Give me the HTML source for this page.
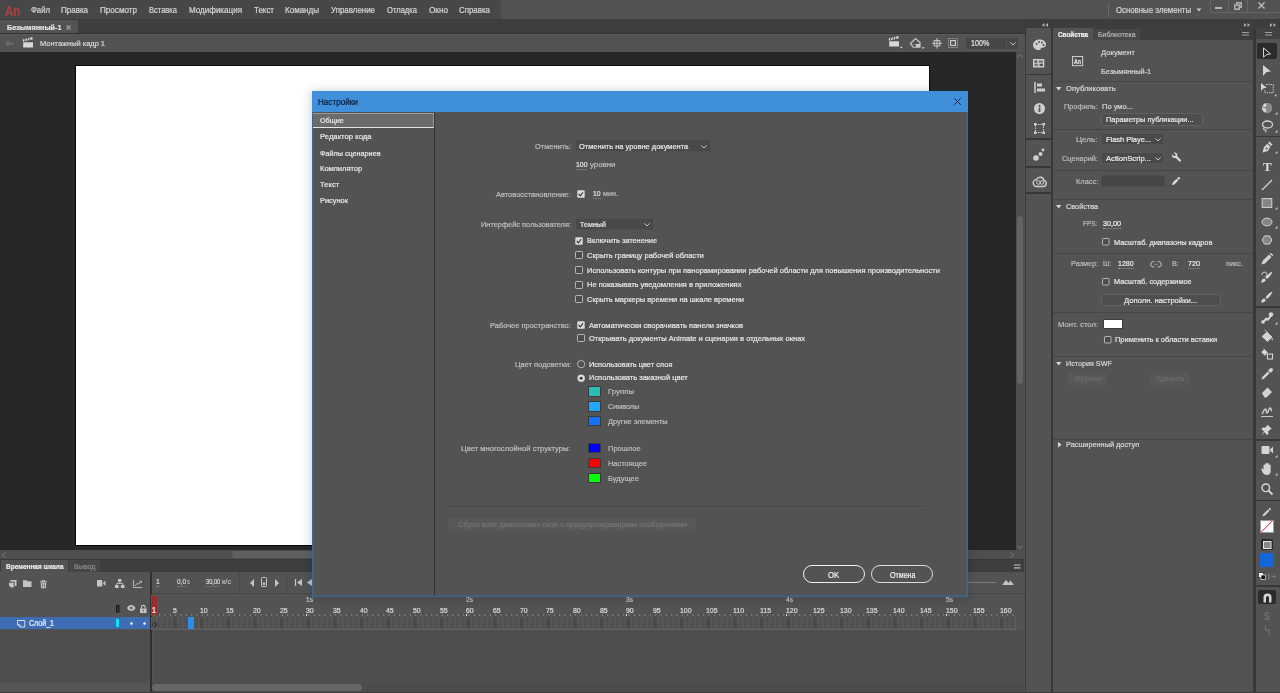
<!DOCTYPE html>
<html lang="ru">
<head>
<meta charset="utf-8">
<title>Adobe Animate</title>
<style>
*{box-sizing:border-box;margin:0;padding:0}
html,body{width:1280px;height:693px;overflow:hidden;background:#535353}
body{font-family:"Liberation Sans","DejaVu Sans",sans-serif;font-size:8px;color:#d2d2d2;position:relative}
#app{position:absolute;left:0;top:0;width:1280px;height:693px;will-change:transform}
.a{position:absolute}
.t{position:absolute;white-space:nowrap;line-height:12px;height:12px;transform-origin:0 50%;-webkit-text-stroke:0.22px currentColor}
svg{position:absolute;overflow:visible}
</style>
</head>
<body>
<div id="app">
<div class="a" style="left:0px;top:0px;width:1280px;height:20px;background:#525252;"></div>
<div class="a" style="left:0px;top:0px;width:501px;height:20px;background:#474747;"></div>
<div class="a" style="left:0px;top:19.4px;width:1280px;height:1px;background:#3c3c3c;"></div>
<span class="t" style="left:4.5px;top:4.77px;font-size:14.6px;color:#a5423e;font-weight:bold;transform:scaleX(0.7859);">An</span>
<span class="t" style="left:31.0px;top:4.01px;font-size:8.3px;color:#d4d4d4;transform:scaleX(0.9311);">Файл</span>
<span class="t" style="left:61.0px;top:4.01px;font-size:8.3px;color:#d4d4d4;transform:scaleX(0.9632);">Правка</span>
<span class="t" style="left:100.0px;top:4.01px;font-size:8.3px;color:#d4d4d4;transform:scaleX(0.9761);">Просмотр</span>
<span class="t" style="left:149.0px;top:4.01px;font-size:8.3px;color:#d4d4d4;transform:scaleX(0.9078);">Вставка</span>
<span class="t" style="left:189.0px;top:4.01px;font-size:8.3px;color:#d4d4d4;transform:scaleX(0.9691);">Модификация</span>
<span class="t" style="left:254.0px;top:4.01px;font-size:8.3px;color:#d4d4d4;transform:scaleX(0.9574);">Текст</span>
<span class="t" style="left:285.0px;top:4.01px;font-size:8.3px;color:#d4d4d4;transform:scaleX(0.9671);">Команды</span>
<span class="t" style="left:331.0px;top:4.01px;font-size:8.3px;color:#d4d4d4;transform:scaleX(0.9539);">Управление</span>
<span class="t" style="left:387.0px;top:4.01px;font-size:8.3px;color:#d4d4d4;transform:scaleX(0.9147);">Отладка</span>
<span class="t" style="left:429.0px;top:4.01px;font-size:8.3px;color:#d4d4d4;transform:scaleX(0.9854);">Окно</span>
<span class="t" style="left:459.0px;top:4.01px;font-size:8.3px;color:#d4d4d4;transform:scaleX(0.9520);">Справка</span>
<div class="a" style="left:1107.6px;top:3.5px;width:1px;height:13px;background:#696969;"></div>
<span class="t" style="left:1116.0px;top:3.71px;font-size:8.3px;color:#d4d4d4;transform:scaleX(0.9393);">Основные элементы</span>
<svg style="left:1196px;top:8px" width="6" height="4" viewBox="0 0 6 4"><path d="M0.5 0.5h5l-2.5 3z" fill="#c8c8c8"/></svg>
<div class="a" style="left:1209.5px;top:-1px;width:71px;height:14.2px;background:transparent;border:1px solid #646464"></div>
<div class="a" style="left:1227.5px;top:0px;width:1px;height:12.7px;background:#646464;"></div>
<div class="a" style="left:1246.5px;top:0px;width:1px;height:12.7px;background:#646464;"></div>
<div class="a" style="left:1215.3px;top:7px;width:6.8px;height:2px;background:#b4b4b4;"></div>
<svg style="left:1233.5px;top:2.2px" width="8" height="8" viewBox="0 0 8 8"><path d="M2.800 2.500v-1.700h4.400v4.400h-1.700" fill="none" stroke="#b4b4b4" stroke-width="1.500"/><rect x="0.800" y="3" width="4.400" height="4.200" fill="none" stroke="#b4b4b4" stroke-width="1.500"/></svg>
<svg style="left:1258.3px;top:2.3px" width="7" height="7" viewBox="0 0 7 7"><path d="M0.500 0.500l6 6M6.500 0.500l-6 6" fill="none" stroke="#b8b8b8" stroke-width="1.500"/></svg>
<div class="a" style="left:0px;top:20px;width:1280px;height:14px;background:#3e3e3e;"></div>
<div class="a" style="left:0px;top:20px;width:78px;height:14px;background:#535353;"></div>
<span class="t" style="left:6.5px;top:22.19px;font-size:8.0px;color:#e6e6e6;font-weight:bold;transform:scaleX(0.9064);">Безымянный-1</span>
<svg style="left:66px;top:25px" width="5" height="5" viewBox="0 0 5 5"><path d="M0.5 0.5l4 4M4.5 0.5l-4 4" stroke="#a0a0a0" stroke-width="1.1" fill="none"/></svg>
<div class="a" style="left:0px;top:33.2px;width:1024.3px;height:1px;background:#303030;"></div>
<div class="a" style="left:0px;top:34.2px;width:1024.3px;height:17.3px;background:#535353;border-top:1px solid #5a5a5a"></div>
<svg style="left:5px;top:40px" width="9" height="7" viewBox="0 0 9 7"><path d="M0 3.5l3.5-3.5v2.3h5v2.4h-5v2.3z" fill="#6a6a6a"/></svg>
<svg style="left:23px;top:37.5px" width="11" height="10" viewBox="0 0 11 10"><path d="M0.200 4.300h9.800v5.200h-9.800z" fill="#d8d8d8"/><g transform="rotate(-15 0.200 3.900)"><rect x="0.200" y="1.500" width="10" height="2.300" fill="#d8d8d8"/><path d="M2.700 1.300l-1.200 2.700M5.300 1.300l-1.200 2.700M7.900 1.300l-1.200 2.700" stroke="#535353" stroke-width=".9"/></g></svg>
<span class="t" style="left:40.0px;top:38.19px;font-size:8.0px;color:#d6d6d6;transform:scaleX(0.9315);">Монтажный кадр 1</span>
<svg style="left:889px;top:37px" width="11" height="10" viewBox="0 0 11 10"><path d="M0.200 4.300h9.800v5.200h-9.800z" fill="#d8d8d8"/><g transform="rotate(-15 0.200 3.900)"><rect x="0.200" y="1.500" width="10" height="2.300" fill="#d8d8d8"/><path d="M2.700 1.300l-1.200 2.700M5.300 1.300l-1.200 2.700M7.900 1.300l-1.200 2.700" stroke="#535353" stroke-width=".9"/></g><path d="M10.800 9.700h3.200l-1.600 1.800z" fill="#d0d0d0"/></svg>
<svg style="left:910px;top:37.5px" width="11" height="10" viewBox="0 0 11 10"><path d="M0.500 5.500l5-5 4.500 4v4.500h-7z" fill="none" stroke="#c8c8c8" stroke-width="1.200"/><path d="M3 6h7v3.500h-7z" fill="#c8c8c8"/><circle cx="4.500" cy="7.500" r="1.500" fill="#535353"/><path d="M11.500 9.200h3.200l-1.600 1.800z" fill="#d0d0d0"/></svg>
<svg style="left:931.5px;top:37.5px" width="10" height="10.5" viewBox="0 0 10 10.5"><rect x="2.200" y="2.600" width="5.600" height="5.300" fill="none" stroke="#c8c8c8"/><path d="M5 0v10.500M0 5.250h10" stroke="#c8c8c8" stroke-width="1"/></svg>
<svg style="left:948.2px;top:38px" width="10" height="10" viewBox="0 0 10 10"><rect x="0.500" y="0.500" width="9" height="9" fill="none" stroke="#a0a0a0" stroke-dasharray="1.200 .8"/><rect x="2.600" y="2.600" width="4.800" height="4.800" fill="none" stroke="#d0d0d0" stroke-width="1.100"/></svg>
<div class="a" style="left:966.4px;top:37.5px;width:39.4px;height:11px;background:#474747;"></div>
<div class="a" style="left:1006.6px;top:37.5px;width:11.4px;height:11px;background:#474747;"></div>
<span class="t" style="left:970.7px;top:37.80px;font-size:8.2px;color:#e0e0e0;transform:scaleX(0.8734);">100%</span>
<svg style="left:1009.5px;top:41.5px" width="6" height="4" viewBox="0 0 6 4"><path d="M0.300 0.300l2.700 2.700 2.700-2.700" fill="none" stroke="#d0d0d0" stroke-width=".9"/></svg>
<div class="a" style="left:0px;top:52px;width:1016px;height:498px;background:#272727;"></div>
<div class="a" style="left:76px;top:66px;width:853px;height:478.6px;background:#ffffff;box-shadow:0 0 0 0.9px #050505"></div>
<div class="a" style="left:1016px;top:52px;width:8.3px;height:498px;background:#4e4e4e;"></div>
<div class="a" style="left:1016.6px;top:216.4px;width:6.6px;height:168px;background:#636363;border-radius:3.300px"></div>
<svg style="left:1017px;top:54px" width="6" height="4" viewBox="0 0 6 4"><path d="M0.5 3.5l2.5-3 2.5 3" fill="none" stroke="#7a7a7a"/></svg>
<svg style="left:1017px;top:544.5px" width="6" height="4" viewBox="0 0 6 4"><path d="M0.5 0.5l2.5 3 2.5-3" fill="none" stroke="#7a7a7a"/></svg>
<div class="a" style="left:0px;top:550px;width:1024.3px;height:9.3px;background:#4e4e4e;"></div>
<div class="a" style="left:232px;top:551.4px;width:470px;height:6.6px;background:#5f5f5f;border-radius:3.300px"></div>
<svg style="left:2px;top:552px" width="4" height="6" viewBox="0 0 4 6"><path d="M3.5 0.5l-3 2.5 3 2.5" fill="none" stroke="#7a7a7a"/></svg>
<svg style="left:1010px;top:552px" width="4" height="6" viewBox="0 0 4 6"><path d="M0.5 0.5l3 2.5-3 2.5" fill="none" stroke="#7a7a7a"/></svg>
<div class="a" style="left:0px;top:559px;width:1024.3px;height:13.3px;background:#3e3e3e;"></div>
<div class="a" style="left:0px;top:559px;width:1024.3px;height:0.8px;background:#383838;"></div>
<div class="a" style="left:0.8px;top:559.8px;width:67.5px;height:12.5px;background:#535353;"></div>
<span class="t" style="left:6.0px;top:560.69px;font-size:8.0px;color:#ececec;font-weight:bold;transform:scaleX(0.8095);">Временная шкала</span>
<div class="a" style="left:68.8px;top:560px;width:31.5px;height:12.3px;background:#464646;"></div>
<span class="t" style="left:73.5px;top:560.69px;font-size:8.0px;color:#8c8c8c;transform:scaleX(0.8889);">Вывод</span>
<svg style="left:1013.5px;top:563.8px" width="6.5" height="5" viewBox="0 0 6.5 5"><path d="M0 1h6.500M0 3.800h6.500" stroke="#9a9a9a" stroke-width="1.700"/></svg>
<div class="a" style="left:0px;top:572px;width:1025px;height:121px;background:#535353;"></div>
<svg style="left:8.5px;top:580px" width="7.5" height="7.5" viewBox="0 0 7.5 7.5"><path d="M1.500 0h6v6h-1.800v-4.200h-4.200z" fill="#c4c4c4"/><path d="M0 2.800h4.700v4.700h-2.700l-2-2z" fill="#c4c4c4"/></svg>
<svg style="left:23px;top:580.3px" width="8.5" height="7" viewBox="0 0 8.5 7"><path d="M0 0.300h3.400l.9 1h4.200v5.700h-8.500z" fill="#c4c4c4"/></svg>
<svg style="left:39.5px;top:579.5px" width="7" height="8.2" viewBox="0 0 7 8.2"><path d="M0 1.600h7M2.300 1.600v-1.100h2.400v1.100" stroke="#c4c4c4" fill="none" stroke-width=".9"/><path d="M0.700 2.600h5.600l-.4 5.600h-4.800z" fill="#c4c4c4"/><path d="M2.500 3.500v3.800M4.500 3.500v3.800" stroke="#535353" stroke-width=".7"/></svg>
<svg style="left:96.5px;top:580px" width="8.5" height="6.6" viewBox="0 0 8.5 6.6"><rect x="0" y="0" width="5.300" height="6.600" rx=".6" fill="#c4c4c4"/><path d="M5.800 3.300l2.700-2.700v5.400z" fill="#c4c4c4"/></svg>
<svg style="left:114.5px;top:579px" width="9.5" height="9" viewBox="0 0 9.5 9"><rect x="3" y="0" width="3.500" height="2.800" fill="#c4c4c4"/><rect x="0" y="6" width="3.600" height="3" fill="#c4c4c4"/><rect x="5.900" y="6" width="3.600" height="3" fill="#c4c4c4"/><path d="M4.750 2.800v1.700M1.800 6v-1.500h5.900v1.500" fill="none" stroke="#c4c4c4" stroke-width=".9"/></svg>
<svg style="left:132.5px;top:580px" width="9" height="8" viewBox="0 0 9 8"><path d="M0.500 0v7.500h8.500" fill="none" stroke="#c4c4c4" stroke-width=".9"/><path d="M2 6l2.500-3 1.300 1.200 2.200-2.700" fill="none" stroke="#c4c4c4" stroke-width=".9"/><path d="M6.300 1.200h2v2" fill="none" stroke="#c4c4c4" stroke-width=".9"/></svg>
<div class="a" style="left:150.3px;top:572px;width:1.6px;height:121px;background:#2f2f2f;"></div>
<span class="t" style="left:155.5px;top:575.69px;font-size:8.0px;color:#dcdcdc;transform:scaleX(0.86);border-bottom:1px dotted #888;height:11px;">1</span>
<span class="t" style="left:177.0px;top:575.69px;font-size:8.0px;color:#dcdcdc;transform:scaleX(0.8090);border-bottom:1px dotted #888;height:11px;">0,0</span>
<span class="t" style="left:187.3px;top:576.11px;font-size:7.0px;color:#b8b8b8;transform:scaleX(0.7714);">s</span>
<span class="t" style="left:206.2px;top:575.69px;font-size:8.0px;color:#dcdcdc;transform:scaleX(0.7139);border-bottom:1px dotted #888;height:11px;">30,00</span>
<span class="t" style="left:222.0px;top:576.11px;font-size:7.0px;color:#b8b8b8;transform:scaleX(1.0804);">к/с</span>
<div class="a" style="left:239.2px;top:573px;width:1px;height:20px;background:#484848;"></div>
<div class="a" style="left:286.2px;top:573px;width:1px;height:20px;background:#484848;"></div>
<svg style="left:249.5px;top:578.5px" width="4" height="8" viewBox="0 0 4 8"><path d="M4 0v8l-4-4z" fill="#c4c4c4"/></svg>
<svg style="left:261px;top:577px" width="6" height="10" viewBox="0 0 6 10"><rect x="0.5" y="0.5" width="5" height="9" rx="0.8" fill="none" stroke="#c4c4c4"/><rect x="1.8" y="5.5" width="2.4" height="2.6" fill="#c4c4c4"/></svg>
<svg style="left:274.5px;top:578.5px" width="4" height="8" viewBox="0 0 4 8"><path d="M0 0v8l4-4z" fill="#c4c4c4"/></svg>
<svg style="left:294.5px;top:579px" width="7" height="7" viewBox="0 0 7 7"><path d="M0.5 0v7" stroke="#c4c4c4" stroke-width="1.2"/><path d="M7 0v7l-5-3.5z" fill="#c4c4c4"/></svg>
<svg style="left:307px;top:579px" width="5" height="7" viewBox="0 0 5 7"><path d="M5 0v7l-5-3.5z" fill="#c4c4c4"/></svg>
<div class="a" style="left:968px;top:582px;width:28px;height:1px;background:#7a7a7a;"></div>
<svg style="left:1002px;top:579px" width="12" height="6" viewBox="0 0 12 6"><path d="M0 6l4-5 2.5 3 2-2.5 3.5 4.5z" fill="#c4c4c4"/></svg>
<div class="a" style="left:151px;top:594px;width:874px;height:22px;background:#535353;"></div>
<div class="a" style="left:152px;top:593.3px;width:873px;height:1px;background:#474747;"></div>
<svg style="left:116px;top:605px" width="3.5" height="7.5" viewBox="0 0 3.5 7.5"><rect x="0.500" y="0.500" width="2.500" height="6.500" fill="#3a3a3a" stroke="#151515" stroke-width=".9"/></svg>
<svg style="left:127px;top:605.3px" width="8.5" height="6" viewBox="0 0 8.5 6"><path d="M0 3c1.800-4 6.700-4 8.500 0c-1.800 4-6.700 4-8.500 0z" fill="#c4c4c4"/><circle cx="4.250" cy="3" r="1.500" fill="#535353"/><circle cx="4.250" cy="3" r=".6" fill="#c4c4c4"/></svg>
<svg style="left:140.3px;top:604.5px" width="6.5" height="8" viewBox="0 0 6.5 8"><rect x="0" y="3.500" width="6.500" height="4.500" fill="#c4c4c4"/><path d="M1.400 3.500v-1.300a1.850 1.850 0 0 1 3.700 0v1.300" fill="none" stroke="#c4c4c4" stroke-width="1.100"/><rect x="2.700" y="4.800" width="1.100" height="1.800" fill="#535353"/></svg>
<span class="t" style="left:172.9px;top:605.10px;font-size:8.1px;color:#dcdcdc;transform:scaleX(0.86);">5</span>
<span class="t" style="left:199.6px;top:605.10px;font-size:8.1px;color:#dcdcdc;transform:scaleX(0.86);">10</span>
<span class="t" style="left:226.3px;top:605.10px;font-size:8.1px;color:#dcdcdc;transform:scaleX(0.86);">15</span>
<span class="t" style="left:252.9px;top:605.10px;font-size:8.1px;color:#dcdcdc;transform:scaleX(0.86);">20</span>
<span class="t" style="left:279.6px;top:605.10px;font-size:8.1px;color:#dcdcdc;transform:scaleX(0.86);">25</span>
<span class="t" style="left:306.3px;top:605.10px;font-size:8.1px;color:#dcdcdc;transform:scaleX(0.86);">30</span>
<span class="t" style="left:332.9px;top:605.10px;font-size:8.1px;color:#dcdcdc;transform:scaleX(0.86);">35</span>
<span class="t" style="left:359.6px;top:605.10px;font-size:8.1px;color:#dcdcdc;transform:scaleX(0.86);">40</span>
<span class="t" style="left:386.3px;top:605.10px;font-size:8.1px;color:#dcdcdc;transform:scaleX(0.86);">45</span>
<span class="t" style="left:412.9px;top:605.10px;font-size:8.1px;color:#dcdcdc;transform:scaleX(0.86);">50</span>
<span class="t" style="left:439.6px;top:605.10px;font-size:8.1px;color:#dcdcdc;transform:scaleX(0.86);">55</span>
<span class="t" style="left:466.3px;top:605.10px;font-size:8.1px;color:#dcdcdc;transform:scaleX(0.86);">60</span>
<span class="t" style="left:492.9px;top:605.10px;font-size:8.1px;color:#dcdcdc;transform:scaleX(0.86);">65</span>
<span class="t" style="left:519.6px;top:605.10px;font-size:8.1px;color:#dcdcdc;transform:scaleX(0.86);">70</span>
<span class="t" style="left:546.3px;top:605.10px;font-size:8.1px;color:#dcdcdc;transform:scaleX(0.86);">75</span>
<span class="t" style="left:572.9px;top:605.10px;font-size:8.1px;color:#dcdcdc;transform:scaleX(0.86);">80</span>
<span class="t" style="left:599.6px;top:605.10px;font-size:8.1px;color:#dcdcdc;transform:scaleX(0.86);">85</span>
<span class="t" style="left:626.3px;top:605.10px;font-size:8.1px;color:#dcdcdc;transform:scaleX(0.86);">90</span>
<span class="t" style="left:652.9px;top:605.10px;font-size:8.1px;color:#dcdcdc;transform:scaleX(0.86);">95</span>
<span class="t" style="left:679.6px;top:605.10px;font-size:8.1px;color:#dcdcdc;transform:scaleX(0.86);">100</span>
<span class="t" style="left:706.3px;top:605.10px;font-size:8.1px;color:#dcdcdc;transform:scaleX(0.86);">105</span>
<span class="t" style="left:732.9px;top:605.10px;font-size:8.1px;color:#dcdcdc;transform:scaleX(0.86);">110</span>
<span class="t" style="left:759.6px;top:605.10px;font-size:8.1px;color:#dcdcdc;transform:scaleX(0.86);">115</span>
<span class="t" style="left:786.3px;top:605.10px;font-size:8.1px;color:#dcdcdc;transform:scaleX(0.86);">120</span>
<span class="t" style="left:812.9px;top:605.10px;font-size:8.1px;color:#dcdcdc;transform:scaleX(0.86);">125</span>
<span class="t" style="left:839.6px;top:605.10px;font-size:8.1px;color:#dcdcdc;transform:scaleX(0.86);">130</span>
<span class="t" style="left:866.3px;top:605.10px;font-size:8.1px;color:#dcdcdc;transform:scaleX(0.86);">135</span>
<span class="t" style="left:892.9px;top:605.10px;font-size:8.1px;color:#dcdcdc;transform:scaleX(0.86);">140</span>
<span class="t" style="left:919.6px;top:605.10px;font-size:8.1px;color:#dcdcdc;transform:scaleX(0.86);">145</span>
<span class="t" style="left:946.3px;top:605.10px;font-size:8.1px;color:#dcdcdc;transform:scaleX(0.86);">150</span>
<span class="t" style="left:972.9px;top:605.10px;font-size:8.1px;color:#dcdcdc;transform:scaleX(0.86);">155</span>
<span class="t" style="left:999.6px;top:605.10px;font-size:8.1px;color:#dcdcdc;transform:scaleX(0.86);">160</span>
<svg style="left:151px;top:614px" width="866" height="2" viewBox="0 0 866 2"><rect x="2.90" y="0.2" width="0.9" height="1.700" fill="#909090"/><rect x="8.23" y="0.2" width="0.9" height="1.700" fill="#909090"/><rect x="13.57" y="0.2" width="0.9" height="1.700" fill="#909090"/><rect x="18.90" y="0.2" width="0.9" height="1.700" fill="#909090"/><rect x="24.23" y="0.2" width="0.9" height="1.700" fill="#909090"/><rect x="29.57" y="0.2" width="0.9" height="1.700" fill="#909090"/><rect x="34.90" y="0.2" width="0.9" height="1.700" fill="#909090"/><rect x="40.23" y="0.2" width="0.9" height="1.700" fill="#909090"/><rect x="45.57" y="0.2" width="0.9" height="1.700" fill="#909090"/><rect x="50.90" y="0.2" width="0.9" height="1.700" fill="#909090"/><rect x="56.23" y="0.2" width="0.9" height="1.700" fill="#909090"/><rect x="61.57" y="0.2" width="0.9" height="1.700" fill="#909090"/><rect x="66.90" y="0.2" width="0.9" height="1.700" fill="#909090"/><rect x="72.23" y="0.2" width="0.9" height="1.700" fill="#909090"/><rect x="77.57" y="0.2" width="0.9" height="1.700" fill="#909090"/><rect x="82.90" y="0.2" width="0.9" height="1.700" fill="#909090"/><rect x="88.23" y="0.2" width="0.9" height="1.700" fill="#909090"/><rect x="93.57" y="0.2" width="0.9" height="1.700" fill="#909090"/><rect x="98.90" y="0.2" width="0.9" height="1.700" fill="#909090"/><rect x="104.23" y="0.2" width="0.9" height="1.700" fill="#909090"/><rect x="109.57" y="0.2" width="0.9" height="1.700" fill="#909090"/><rect x="114.90" y="0.2" width="0.9" height="1.700" fill="#909090"/><rect x="120.23" y="0.2" width="0.9" height="1.700" fill="#909090"/><rect x="125.57" y="0.2" width="0.9" height="1.700" fill="#909090"/><rect x="130.90" y="0.2" width="0.9" height="1.700" fill="#909090"/><rect x="136.23" y="0.2" width="0.9" height="1.700" fill="#909090"/><rect x="141.57" y="0.2" width="0.9" height="1.700" fill="#909090"/><rect x="146.90" y="0.2" width="0.9" height="1.700" fill="#909090"/><rect x="152.23" y="0.2" width="0.9" height="1.700" fill="#909090"/><rect x="157.57" y="0.2" width="0.9" height="1.700" fill="#909090"/><rect x="162.90" y="0.2" width="0.9" height="1.700" fill="#909090"/><rect x="168.23" y="0.2" width="0.9" height="1.700" fill="#909090"/><rect x="173.57" y="0.2" width="0.9" height="1.700" fill="#909090"/><rect x="178.90" y="0.2" width="0.9" height="1.700" fill="#909090"/><rect x="184.23" y="0.2" width="0.9" height="1.700" fill="#909090"/><rect x="189.57" y="0.2" width="0.9" height="1.700" fill="#909090"/><rect x="194.90" y="0.2" width="0.9" height="1.700" fill="#909090"/><rect x="200.23" y="0.2" width="0.9" height="1.700" fill="#909090"/><rect x="205.57" y="0.2" width="0.9" height="1.700" fill="#909090"/><rect x="210.90" y="0.2" width="0.9" height="1.700" fill="#909090"/><rect x="216.23" y="0.2" width="0.9" height="1.700" fill="#909090"/><rect x="221.57" y="0.2" width="0.9" height="1.700" fill="#909090"/><rect x="226.90" y="0.2" width="0.9" height="1.700" fill="#909090"/><rect x="232.23" y="0.2" width="0.9" height="1.700" fill="#909090"/><rect x="237.57" y="0.2" width="0.9" height="1.700" fill="#909090"/><rect x="242.90" y="0.2" width="0.9" height="1.700" fill="#909090"/><rect x="248.23" y="0.2" width="0.9" height="1.700" fill="#909090"/><rect x="253.57" y="0.2" width="0.9" height="1.700" fill="#909090"/><rect x="258.90" y="0.2" width="0.9" height="1.700" fill="#909090"/><rect x="264.23" y="0.2" width="0.9" height="1.700" fill="#909090"/><rect x="269.57" y="0.2" width="0.9" height="1.700" fill="#909090"/><rect x="274.90" y="0.2" width="0.9" height="1.700" fill="#909090"/><rect x="280.23" y="0.2" width="0.9" height="1.700" fill="#909090"/><rect x="285.57" y="0.2" width="0.9" height="1.700" fill="#909090"/><rect x="290.90" y="0.2" width="0.9" height="1.700" fill="#909090"/><rect x="296.23" y="0.2" width="0.9" height="1.700" fill="#909090"/><rect x="301.57" y="0.2" width="0.9" height="1.700" fill="#909090"/><rect x="306.90" y="0.2" width="0.9" height="1.700" fill="#909090"/><rect x="312.23" y="0.2" width="0.9" height="1.700" fill="#909090"/><rect x="317.57" y="0.2" width="0.9" height="1.700" fill="#909090"/><rect x="322.90" y="0.2" width="0.9" height="1.700" fill="#909090"/><rect x="328.23" y="0.2" width="0.9" height="1.700" fill="#909090"/><rect x="333.57" y="0.2" width="0.9" height="1.700" fill="#909090"/><rect x="338.90" y="0.2" width="0.9" height="1.700" fill="#909090"/><rect x="344.23" y="0.2" width="0.9" height="1.700" fill="#909090"/><rect x="349.57" y="0.2" width="0.9" height="1.700" fill="#909090"/><rect x="354.90" y="0.2" width="0.9" height="1.700" fill="#909090"/><rect x="360.23" y="0.2" width="0.9" height="1.700" fill="#909090"/><rect x="365.57" y="0.2" width="0.9" height="1.700" fill="#909090"/><rect x="370.90" y="0.2" width="0.9" height="1.700" fill="#909090"/><rect x="376.23" y="0.2" width="0.9" height="1.700" fill="#909090"/><rect x="381.57" y="0.2" width="0.9" height="1.700" fill="#909090"/><rect x="386.90" y="0.2" width="0.9" height="1.700" fill="#909090"/><rect x="392.23" y="0.2" width="0.9" height="1.700" fill="#909090"/><rect x="397.57" y="0.2" width="0.9" height="1.700" fill="#909090"/><rect x="402.90" y="0.2" width="0.9" height="1.700" fill="#909090"/><rect x="408.23" y="0.2" width="0.9" height="1.700" fill="#909090"/><rect x="413.57" y="0.2" width="0.9" height="1.700" fill="#909090"/><rect x="418.90" y="0.2" width="0.9" height="1.700" fill="#909090"/><rect x="424.23" y="0.2" width="0.9" height="1.700" fill="#909090"/><rect x="429.57" y="0.2" width="0.9" height="1.700" fill="#909090"/><rect x="434.90" y="0.2" width="0.9" height="1.700" fill="#909090"/><rect x="440.23" y="0.2" width="0.9" height="1.700" fill="#909090"/><rect x="445.57" y="0.2" width="0.9" height="1.700" fill="#909090"/><rect x="450.90" y="0.2" width="0.9" height="1.700" fill="#909090"/><rect x="456.23" y="0.2" width="0.9" height="1.700" fill="#909090"/><rect x="461.57" y="0.2" width="0.9" height="1.700" fill="#909090"/><rect x="466.90" y="0.2" width="0.9" height="1.700" fill="#909090"/><rect x="472.23" y="0.2" width="0.9" height="1.700" fill="#909090"/><rect x="477.57" y="0.2" width="0.9" height="1.700" fill="#909090"/><rect x="482.90" y="0.2" width="0.9" height="1.700" fill="#909090"/><rect x="488.23" y="0.2" width="0.9" height="1.700" fill="#909090"/><rect x="493.57" y="0.2" width="0.9" height="1.700" fill="#909090"/><rect x="498.90" y="0.2" width="0.9" height="1.700" fill="#909090"/><rect x="504.23" y="0.2" width="0.9" height="1.700" fill="#909090"/><rect x="509.57" y="0.2" width="0.9" height="1.700" fill="#909090"/><rect x="514.90" y="0.2" width="0.9" height="1.700" fill="#909090"/><rect x="520.23" y="0.2" width="0.9" height="1.700" fill="#909090"/><rect x="525.57" y="0.2" width="0.9" height="1.700" fill="#909090"/><rect x="530.90" y="0.2" width="0.9" height="1.700" fill="#909090"/><rect x="536.23" y="0.2" width="0.9" height="1.700" fill="#909090"/><rect x="541.57" y="0.2" width="0.9" height="1.700" fill="#909090"/><rect x="546.90" y="0.2" width="0.9" height="1.700" fill="#909090"/><rect x="552.23" y="0.2" width="0.9" height="1.700" fill="#909090"/><rect x="557.57" y="0.2" width="0.9" height="1.700" fill="#909090"/><rect x="562.90" y="0.2" width="0.9" height="1.700" fill="#909090"/><rect x="568.23" y="0.2" width="0.9" height="1.700" fill="#909090"/><rect x="573.57" y="0.2" width="0.9" height="1.700" fill="#909090"/><rect x="578.90" y="0.2" width="0.9" height="1.700" fill="#909090"/><rect x="584.23" y="0.2" width="0.9" height="1.700" fill="#909090"/><rect x="589.57" y="0.2" width="0.9" height="1.700" fill="#909090"/><rect x="594.90" y="0.2" width="0.9" height="1.700" fill="#909090"/><rect x="600.23" y="0.2" width="0.9" height="1.700" fill="#909090"/><rect x="605.57" y="0.2" width="0.9" height="1.700" fill="#909090"/><rect x="610.90" y="0.2" width="0.9" height="1.700" fill="#909090"/><rect x="616.23" y="0.2" width="0.9" height="1.700" fill="#909090"/><rect x="621.57" y="0.2" width="0.9" height="1.700" fill="#909090"/><rect x="626.90" y="0.2" width="0.9" height="1.700" fill="#909090"/><rect x="632.23" y="0.2" width="0.9" height="1.700" fill="#909090"/><rect x="637.57" y="0.2" width="0.9" height="1.700" fill="#909090"/><rect x="642.90" y="0.2" width="0.9" height="1.700" fill="#909090"/><rect x="648.23" y="0.2" width="0.9" height="1.700" fill="#909090"/><rect x="653.57" y="0.2" width="0.9" height="1.700" fill="#909090"/><rect x="658.90" y="0.2" width="0.9" height="1.700" fill="#909090"/><rect x="664.23" y="0.2" width="0.9" height="1.700" fill="#909090"/><rect x="669.57" y="0.2" width="0.9" height="1.700" fill="#909090"/><rect x="674.90" y="0.2" width="0.9" height="1.700" fill="#909090"/><rect x="680.23" y="0.2" width="0.9" height="1.700" fill="#909090"/><rect x="685.57" y="0.2" width="0.9" height="1.700" fill="#909090"/><rect x="690.90" y="0.2" width="0.9" height="1.700" fill="#909090"/><rect x="696.23" y="0.2" width="0.9" height="1.700" fill="#909090"/><rect x="701.57" y="0.2" width="0.9" height="1.700" fill="#909090"/><rect x="706.90" y="0.2" width="0.9" height="1.700" fill="#909090"/><rect x="712.23" y="0.2" width="0.9" height="1.700" fill="#909090"/><rect x="717.57" y="0.2" width="0.9" height="1.700" fill="#909090"/><rect x="722.90" y="0.2" width="0.9" height="1.700" fill="#909090"/><rect x="728.23" y="0.2" width="0.9" height="1.700" fill="#909090"/><rect x="733.57" y="0.2" width="0.9" height="1.700" fill="#909090"/><rect x="738.90" y="0.2" width="0.9" height="1.700" fill="#909090"/><rect x="744.23" y="0.2" width="0.9" height="1.700" fill="#909090"/><rect x="749.57" y="0.2" width="0.9" height="1.700" fill="#909090"/><rect x="754.90" y="0.2" width="0.9" height="1.700" fill="#909090"/><rect x="760.23" y="0.2" width="0.9" height="1.700" fill="#909090"/><rect x="765.57" y="0.2" width="0.9" height="1.700" fill="#909090"/><rect x="770.90" y="0.2" width="0.9" height="1.700" fill="#909090"/><rect x="776.23" y="0.2" width="0.9" height="1.700" fill="#909090"/><rect x="781.57" y="0.2" width="0.9" height="1.700" fill="#909090"/><rect x="786.90" y="0.2" width="0.9" height="1.700" fill="#909090"/><rect x="792.23" y="0.2" width="0.9" height="1.700" fill="#909090"/><rect x="797.57" y="0.2" width="0.9" height="1.700" fill="#909090"/><rect x="802.90" y="0.2" width="0.9" height="1.700" fill="#909090"/><rect x="808.23" y="0.2" width="0.9" height="1.700" fill="#909090"/><rect x="813.57" y="0.2" width="0.9" height="1.700" fill="#909090"/><rect x="818.90" y="0.2" width="0.9" height="1.700" fill="#909090"/><rect x="824.23" y="0.2" width="0.9" height="1.700" fill="#909090"/><rect x="829.57" y="0.2" width="0.9" height="1.700" fill="#909090"/><rect x="834.90" y="0.2" width="0.9" height="1.700" fill="#909090"/><rect x="840.23" y="0.2" width="0.9" height="1.700" fill="#909090"/><rect x="845.57" y="0.2" width="0.9" height="1.700" fill="#909090"/><rect x="850.90" y="0.2" width="0.9" height="1.700" fill="#909090"/><rect x="856.23" y="0.2" width="0.9" height="1.700" fill="#909090"/><rect x="861.57" y="0.2" width="0.9" height="1.700" fill="#909090"/></svg>
<span class="t" style="left:306.2px;top:594.27px;font-size:7.8px;color:#c8c8c8;transform:scaleX(0.86);">1s</span>
<div class="a" style="left:305.7px;top:613.5px;width:1px;height:2.5px;background:#e0e0e0;"></div>
<span class="t" style="left:466.2px;top:594.27px;font-size:7.8px;color:#c8c8c8;transform:scaleX(0.86);">2s</span>
<div class="a" style="left:465.7px;top:613.5px;width:1px;height:2.5px;background:#e0e0e0;"></div>
<span class="t" style="left:626.2px;top:594.27px;font-size:7.8px;color:#c8c8c8;transform:scaleX(0.86);">3s</span>
<div class="a" style="left:625.7px;top:613.5px;width:1px;height:2.5px;background:#e0e0e0;"></div>
<span class="t" style="left:786.2px;top:594.27px;font-size:7.8px;color:#c8c8c8;transform:scaleX(0.86);">4s</span>
<div class="a" style="left:785.7px;top:613.5px;width:1px;height:2.5px;background:#e0e0e0;"></div>
<span class="t" style="left:946.2px;top:594.27px;font-size:7.8px;color:#c8c8c8;transform:scaleX(0.86);">5s</span>
<div class="a" style="left:945.7px;top:613.5px;width:1px;height:2.5px;background:#e0e0e0;"></div>
<div class="a" style="left:0px;top:629.5px;width:150.3px;height:53.5px;background:#4e4e4e;"></div>
<div class="a" style="left:152px;top:629.8px;width:872.3px;height:53.2px;background:#4e4e4e;"></div>
<div class="a" style="left:0px;top:616.8px;width:150.3px;height:12.5px;background:#3e6db3;"></div>
<svg style="left:17.2px;top:619.5px" width="8.3" height="7.5" viewBox="0 0 8.3 7.5"><path d="M0.500 0.500h7.300v6.500h-4.800l-2.500-2.300z" fill="none" stroke="#e8e8e8" stroke-width=".9"/><path d="M0.500 4.700h2.500v2.300" fill="none" stroke="#e8e8e8" stroke-width=".8"/></svg>
<span class="t" style="left:29.0px;top:617.21px;font-size:8.3px;color:#f0f0f0;transform:scaleX(0.8502);">Слой_1</span>
<div class="a" style="left:116px;top:619px;width:3.4px;height:7.6px;background:#10e0ff;"></div>
<svg style="left:130px;top:621.5px" width="3" height="3" viewBox="0 0 3 3"><circle cx="1.5" cy="1.5" r="1.2" fill="#fff"/></svg>
<svg style="left:142.7px;top:621.5px" width="3" height="3" viewBox="0 0 3 3"><circle cx="1.5" cy="1.5" r="1.2" fill="#fff"/></svg>
<div class="a" style="left:151.3px;top:616.7px;width:865px;height:12.6px;background:#5f5f5f;"></div>
<svg style="left:151.3px;top:617px" width="865" height="12" viewBox="0 0 865 12"><rect x="0.55" y="0.3" width="4.33" height="11.2" fill="#515151"/><rect x="5.88" y="0.3" width="4.33" height="11.2" fill="#515151"/><rect x="11.22" y="0.3" width="4.33" height="11.2" fill="#515151"/><rect x="16.55" y="0.3" width="4.33" height="11.2" fill="#515151"/><rect x="21.88" y="0.3" width="4.33" height="11.2" fill="#494949"/><rect x="27.22" y="0.3" width="4.33" height="11.2" fill="#515151"/><rect x="32.55" y="0.3" width="4.33" height="11.2" fill="#515151"/><rect x="37.88" y="0.3" width="4.33" height="11.2" fill="#515151"/><rect x="43.22" y="0.3" width="4.33" height="11.2" fill="#515151"/><rect x="48.55" y="0.3" width="4.33" height="11.2" fill="#494949"/><rect x="53.88" y="0.3" width="4.33" height="11.2" fill="#515151"/><rect x="59.22" y="0.3" width="4.33" height="11.2" fill="#515151"/><rect x="64.55" y="0.3" width="4.33" height="11.2" fill="#515151"/><rect x="69.88" y="0.3" width="4.33" height="11.2" fill="#515151"/><rect x="75.22" y="0.3" width="4.33" height="11.2" fill="#494949"/><rect x="80.55" y="0.3" width="4.33" height="11.2" fill="#515151"/><rect x="85.88" y="0.3" width="4.33" height="11.2" fill="#515151"/><rect x="91.22" y="0.3" width="4.33" height="11.2" fill="#515151"/><rect x="96.55" y="0.3" width="4.33" height="11.2" fill="#515151"/><rect x="101.88" y="0.3" width="4.33" height="11.2" fill="#494949"/><rect x="107.22" y="0.3" width="4.33" height="11.2" fill="#515151"/><rect x="112.55" y="0.3" width="4.33" height="11.2" fill="#515151"/><rect x="117.88" y="0.3" width="4.33" height="11.2" fill="#515151"/><rect x="123.22" y="0.3" width="4.33" height="11.2" fill="#515151"/><rect x="128.55" y="0.3" width="4.33" height="11.2" fill="#494949"/><rect x="133.88" y="0.3" width="4.33" height="11.2" fill="#515151"/><rect x="139.22" y="0.3" width="4.33" height="11.2" fill="#515151"/><rect x="144.55" y="0.3" width="4.33" height="11.2" fill="#515151"/><rect x="149.88" y="0.3" width="4.33" height="11.2" fill="#515151"/><rect x="155.22" y="0.3" width="4.33" height="11.2" fill="#494949"/><rect x="160.55" y="0.3" width="4.33" height="11.2" fill="#515151"/><rect x="165.88" y="0.3" width="4.33" height="11.2" fill="#515151"/><rect x="171.22" y="0.3" width="4.33" height="11.2" fill="#515151"/><rect x="176.55" y="0.3" width="4.33" height="11.2" fill="#515151"/><rect x="181.88" y="0.3" width="4.33" height="11.2" fill="#494949"/><rect x="187.22" y="0.3" width="4.33" height="11.2" fill="#515151"/><rect x="192.55" y="0.3" width="4.33" height="11.2" fill="#515151"/><rect x="197.88" y="0.3" width="4.33" height="11.2" fill="#515151"/><rect x="203.22" y="0.3" width="4.33" height="11.2" fill="#515151"/><rect x="208.55" y="0.3" width="4.33" height="11.2" fill="#494949"/><rect x="213.88" y="0.3" width="4.33" height="11.2" fill="#515151"/><rect x="219.22" y="0.3" width="4.33" height="11.2" fill="#515151"/><rect x="224.55" y="0.3" width="4.33" height="11.2" fill="#515151"/><rect x="229.88" y="0.3" width="4.33" height="11.2" fill="#515151"/><rect x="235.22" y="0.3" width="4.33" height="11.2" fill="#494949"/><rect x="240.55" y="0.3" width="4.33" height="11.2" fill="#515151"/><rect x="245.88" y="0.3" width="4.33" height="11.2" fill="#515151"/><rect x="251.22" y="0.3" width="4.33" height="11.2" fill="#515151"/><rect x="256.55" y="0.3" width="4.33" height="11.2" fill="#515151"/><rect x="261.88" y="0.3" width="4.33" height="11.2" fill="#494949"/><rect x="267.22" y="0.3" width="4.33" height="11.2" fill="#515151"/><rect x="272.55" y="0.3" width="4.33" height="11.2" fill="#515151"/><rect x="277.88" y="0.3" width="4.33" height="11.2" fill="#515151"/><rect x="283.22" y="0.3" width="4.33" height="11.2" fill="#515151"/><rect x="288.55" y="0.3" width="4.33" height="11.2" fill="#494949"/><rect x="293.88" y="0.3" width="4.33" height="11.2" fill="#515151"/><rect x="299.22" y="0.3" width="4.33" height="11.2" fill="#515151"/><rect x="304.55" y="0.3" width="4.33" height="11.2" fill="#515151"/><rect x="309.88" y="0.3" width="4.33" height="11.2" fill="#515151"/><rect x="315.22" y="0.3" width="4.33" height="11.2" fill="#494949"/><rect x="320.55" y="0.3" width="4.33" height="11.2" fill="#515151"/><rect x="325.88" y="0.3" width="4.33" height="11.2" fill="#515151"/><rect x="331.22" y="0.3" width="4.33" height="11.2" fill="#515151"/><rect x="336.55" y="0.3" width="4.33" height="11.2" fill="#515151"/><rect x="341.88" y="0.3" width="4.33" height="11.2" fill="#494949"/><rect x="347.22" y="0.3" width="4.33" height="11.2" fill="#515151"/><rect x="352.55" y="0.3" width="4.33" height="11.2" fill="#515151"/><rect x="357.88" y="0.3" width="4.33" height="11.2" fill="#515151"/><rect x="363.22" y="0.3" width="4.33" height="11.2" fill="#515151"/><rect x="368.55" y="0.3" width="4.33" height="11.2" fill="#494949"/><rect x="373.88" y="0.3" width="4.33" height="11.2" fill="#515151"/><rect x="379.22" y="0.3" width="4.33" height="11.2" fill="#515151"/><rect x="384.55" y="0.3" width="4.33" height="11.2" fill="#515151"/><rect x="389.88" y="0.3" width="4.33" height="11.2" fill="#515151"/><rect x="395.22" y="0.3" width="4.33" height="11.2" fill="#494949"/><rect x="400.55" y="0.3" width="4.33" height="11.2" fill="#515151"/><rect x="405.88" y="0.3" width="4.33" height="11.2" fill="#515151"/><rect x="411.22" y="0.3" width="4.33" height="11.2" fill="#515151"/><rect x="416.55" y="0.3" width="4.33" height="11.2" fill="#515151"/><rect x="421.88" y="0.3" width="4.33" height="11.2" fill="#494949"/><rect x="427.22" y="0.3" width="4.33" height="11.2" fill="#515151"/><rect x="432.55" y="0.3" width="4.33" height="11.2" fill="#515151"/><rect x="437.88" y="0.3" width="4.33" height="11.2" fill="#515151"/><rect x="443.22" y="0.3" width="4.33" height="11.2" fill="#515151"/><rect x="448.55" y="0.3" width="4.33" height="11.2" fill="#494949"/><rect x="453.88" y="0.3" width="4.33" height="11.2" fill="#515151"/><rect x="459.22" y="0.3" width="4.33" height="11.2" fill="#515151"/><rect x="464.55" y="0.3" width="4.33" height="11.2" fill="#515151"/><rect x="469.88" y="0.3" width="4.33" height="11.2" fill="#515151"/><rect x="475.22" y="0.3" width="4.33" height="11.2" fill="#494949"/><rect x="480.55" y="0.3" width="4.33" height="11.2" fill="#515151"/><rect x="485.88" y="0.3" width="4.33" height="11.2" fill="#515151"/><rect x="491.22" y="0.3" width="4.33" height="11.2" fill="#515151"/><rect x="496.55" y="0.3" width="4.33" height="11.2" fill="#515151"/><rect x="501.88" y="0.3" width="4.33" height="11.2" fill="#494949"/><rect x="507.22" y="0.3" width="4.33" height="11.2" fill="#515151"/><rect x="512.55" y="0.3" width="4.33" height="11.2" fill="#515151"/><rect x="517.88" y="0.3" width="4.33" height="11.2" fill="#515151"/><rect x="523.22" y="0.3" width="4.33" height="11.2" fill="#515151"/><rect x="528.55" y="0.3" width="4.33" height="11.2" fill="#494949"/><rect x="533.88" y="0.3" width="4.33" height="11.2" fill="#515151"/><rect x="539.22" y="0.3" width="4.33" height="11.2" fill="#515151"/><rect x="544.55" y="0.3" width="4.33" height="11.2" fill="#515151"/><rect x="549.88" y="0.3" width="4.33" height="11.2" fill="#515151"/><rect x="555.22" y="0.3" width="4.33" height="11.2" fill="#494949"/><rect x="560.55" y="0.3" width="4.33" height="11.2" fill="#515151"/><rect x="565.88" y="0.3" width="4.33" height="11.2" fill="#515151"/><rect x="571.22" y="0.3" width="4.33" height="11.2" fill="#515151"/><rect x="576.55" y="0.3" width="4.33" height="11.2" fill="#515151"/><rect x="581.88" y="0.3" width="4.33" height="11.2" fill="#494949"/><rect x="587.22" y="0.3" width="4.33" height="11.2" fill="#515151"/><rect x="592.55" y="0.3" width="4.33" height="11.2" fill="#515151"/><rect x="597.88" y="0.3" width="4.33" height="11.2" fill="#515151"/><rect x="603.22" y="0.3" width="4.33" height="11.2" fill="#515151"/><rect x="608.55" y="0.3" width="4.33" height="11.2" fill="#494949"/><rect x="613.88" y="0.3" width="4.33" height="11.2" fill="#515151"/><rect x="619.22" y="0.3" width="4.33" height="11.2" fill="#515151"/><rect x="624.55" y="0.3" width="4.33" height="11.2" fill="#515151"/><rect x="629.88" y="0.3" width="4.33" height="11.2" fill="#515151"/><rect x="635.22" y="0.3" width="4.33" height="11.2" fill="#494949"/><rect x="640.55" y="0.3" width="4.33" height="11.2" fill="#515151"/><rect x="645.88" y="0.3" width="4.33" height="11.2" fill="#515151"/><rect x="651.22" y="0.3" width="4.33" height="11.2" fill="#515151"/><rect x="656.55" y="0.3" width="4.33" height="11.2" fill="#515151"/><rect x="661.88" y="0.3" width="4.33" height="11.2" fill="#494949"/><rect x="667.22" y="0.3" width="4.33" height="11.2" fill="#515151"/><rect x="672.55" y="0.3" width="4.33" height="11.2" fill="#515151"/><rect x="677.88" y="0.3" width="4.33" height="11.2" fill="#515151"/><rect x="683.22" y="0.3" width="4.33" height="11.2" fill="#515151"/><rect x="688.55" y="0.3" width="4.33" height="11.2" fill="#494949"/><rect x="693.88" y="0.3" width="4.33" height="11.2" fill="#515151"/><rect x="699.22" y="0.3" width="4.33" height="11.2" fill="#515151"/><rect x="704.55" y="0.3" width="4.33" height="11.2" fill="#515151"/><rect x="709.88" y="0.3" width="4.33" height="11.2" fill="#515151"/><rect x="715.22" y="0.3" width="4.33" height="11.2" fill="#494949"/><rect x="720.55" y="0.3" width="4.33" height="11.2" fill="#515151"/><rect x="725.88" y="0.3" width="4.33" height="11.2" fill="#515151"/><rect x="731.22" y="0.3" width="4.33" height="11.2" fill="#515151"/><rect x="736.55" y="0.3" width="4.33" height="11.2" fill="#515151"/><rect x="741.88" y="0.3" width="4.33" height="11.2" fill="#494949"/><rect x="747.22" y="0.3" width="4.33" height="11.2" fill="#515151"/><rect x="752.55" y="0.3" width="4.33" height="11.2" fill="#515151"/><rect x="757.88" y="0.3" width="4.33" height="11.2" fill="#515151"/><rect x="763.22" y="0.3" width="4.33" height="11.2" fill="#515151"/><rect x="768.55" y="0.3" width="4.33" height="11.2" fill="#494949"/><rect x="773.88" y="0.3" width="4.33" height="11.2" fill="#515151"/><rect x="779.22" y="0.3" width="4.33" height="11.2" fill="#515151"/><rect x="784.55" y="0.3" width="4.33" height="11.2" fill="#515151"/><rect x="789.88" y="0.3" width="4.33" height="11.2" fill="#515151"/><rect x="795.22" y="0.3" width="4.33" height="11.2" fill="#494949"/><rect x="800.55" y="0.3" width="4.33" height="11.2" fill="#515151"/><rect x="805.88" y="0.3" width="4.33" height="11.2" fill="#515151"/><rect x="811.22" y="0.3" width="4.33" height="11.2" fill="#515151"/><rect x="816.55" y="0.3" width="4.33" height="11.2" fill="#515151"/><rect x="821.88" y="0.3" width="4.33" height="11.2" fill="#494949"/><rect x="827.22" y="0.3" width="4.33" height="11.2" fill="#515151"/><rect x="832.55" y="0.3" width="4.33" height="11.2" fill="#515151"/><rect x="837.88" y="0.3" width="4.33" height="11.2" fill="#515151"/><rect x="843.22" y="0.3" width="4.33" height="11.2" fill="#515151"/><rect x="848.55" y="0.3" width="4.33" height="11.2" fill="#494949"/><rect x="853.88" y="0.3" width="4.33" height="11.2" fill="#515151"/><rect x="859.22" y="0.3" width="4.33" height="11.2" fill="#515151"/></svg>
<div class="a" style="left:188.33333333333331px;top:616.8px;width:5.833333333333333px;height:12.5px;background:#2d8ceb;"></div>
<svg style="left:151.60000000000002px;top:621.3px" width="5" height="7" viewBox="0 0 5 7"><circle cx="2.500" cy="3.500" r="1.900" fill="none" stroke="#161616" stroke-width=".9"/></svg>
<div class="a" style="left:151.3px;top:629px;width:865px;height:0.8px;background:#636363;"></div>
<div class="a" style="left:150.6px;top:595.9px;width:7px;height:19.6px;background:#9a2c2c;border:1px solid #aa3333;border-bottom:none"></div>
<span class="t" style="left:152.2px;top:605.10px;font-size:8.2px;color:#ffffff;transform:scaleX(0.86);">1</span>
<div class="a" style="left:152.9px;top:615.5px;width:1px;height:67.5px;background:#a83636;"></div>
<div class="a" style="left:0px;top:683px;width:150.3px;height:10px;background:#555555;"></div>
<div class="a" style="left:152px;top:683px;width:872.3px;height:10px;background:#4c4c4c;"></div>
<div class="a" style="left:152px;top:683.8px;width:210px;height:7.5px;background:#666666;border-radius:4px"></div>
<div class="a" style="left:1025px;top:20px;width:255px;height:673px;background:#383838;"></div>
<div class="a" style="left:1025.8px;top:20.4px;width:254.2px;height:8px;background:#3d3d3d;"></div>
<svg style="left:1041.5px;top:22.6px" width="6" height="4" viewBox="0 0 6 4"><path d="M2.5 0v4l-2.5-2zM6 0v4l-2.5-2z" fill="#b0b0b0"/></svg>
<svg style="left:1243.5px;top:22.5px" width="6" height="4" viewBox="0 0 6 4"><path d="M0 0v4l2.5-2zM3.5 0v4l2.5-2z" fill="#b0b0b0"/></svg>
<svg style="left:1270.3px;top:22.5px" width="6" height="4" viewBox="0 0 6 4"><path d="M0 0v4l2.5-2zM3.5 0v4l2.5-2z" fill="#b0b0b0"/></svg>
<div class="a" style="left:1025.6px;top:28.4px;width:25.4px;height:665px;background:#535353;"></div>
<svg style="left:1032.5px;top:31px" width="12" height="2" viewBox="0 0 12 2"><path d="M0 1h12" stroke="#626262" stroke-width="1.3" stroke-dasharray="1.5 1.5"/></svg>
<svg style="left:1032.5px;top:39px" width="13" height="11" viewBox="0 0 13 11"><path d="M6.5 0.5c4 0 6.5 2.3 6.5 5s-2.5 3.5-4 3.2c-1-.2-1.3.3-1.2 1 .1.8-.7 1.3-2 1.3-3 0-5.8-2-5.8-5s2.5-5.5 6.500-5.500z" fill="#cfcfcf"/><circle cx="3.5" cy="5" r="1" fill="#535353"/><circle cx="6" cy="3" r="1" fill="#535353"/><circle cx="9" cy="3.500" r="1" fill="#535353"/><circle cx="10.500" cy="6" r="1" fill="#535353"/></svg>
<svg style="left:1033px;top:58.6px" width="11.3" height="8.5" viewBox="0 0 12 9"><rect x="0" y="0" width="12" height="9" fill="#cfcfcf"/><rect x="1.5" y="1.500" width="3" height="2.500" fill="#535353"/><rect x="6" y="1.500" width="4.500" height="2.500" fill="#777"/><rect x="1.5" y="5" width="4" height="2.500" fill="#777"/><rect x="7" y="5" width="3.500" height="2.500" fill="#535353"/></svg>
<div class="a" style="left:1025.8px;top:73.5px;width:26px;height:1.5px;background:#383838;"></div>
<svg style="left:1032.5px;top:77px" width="12" height="2" viewBox="0 0 12 2"><path d="M0 1h12" stroke="#626262" stroke-width="1.3" stroke-dasharray="1.5 1.5"/></svg>
<svg style="left:1034px;top:82px" width="11" height="11" viewBox="0 0 11 11"><path d="M1 0v11" stroke="#cfcfcf" stroke-width="1.500"/><rect x="3" y="1.500" width="5" height="3" fill="#cfcfcf"/><rect x="3" y="6.500" width="8" height="3" fill="#cfcfcf"/></svg>
<svg style="left:1033.5px;top:103px" width="11" height="11" viewBox="0 0 11 11"><circle cx="5.500" cy="5.500" r="5.500" fill="#cfcfcf"/><rect x="4.600" y="4.500" width="1.800" height="4.500" fill="#535353"/><circle cx="5.500" cy="2.800" r="1.100" fill="#535353"/></svg>
<svg style="left:1034px;top:123px" width="11" height="11" viewBox="0 0 11 11"><rect x="1.500" y="1.500" width="8" height="8" fill="none" stroke="#cfcfcf" stroke-dasharray="1.500 1"/><rect x="0" y="0" width="2.500" height="2.500" fill="#cfcfcf"/><rect x="8.500" y="0" width="2.500" height="2.500" fill="#cfcfcf"/><rect x="0" y="8.500" width="2.500" height="2.500" fill="#cfcfcf"/><rect x="8.500" y="8.500" width="2.500" height="2.500" fill="#cfcfcf"/></svg>
<div class="a" style="left:1025.8px;top:138px;width:26px;height:1.5px;background:#383838;"></div>
<svg style="left:1032.5px;top:142px" width="12" height="2" viewBox="0 0 12 2"><path d="M0 1h12" stroke="#626262" stroke-width="1.3" stroke-dasharray="1.5 1.5"/></svg>
<svg style="left:1033px;top:148px" width="12" height="13" viewBox="0 0 12 13"><circle cx="3" cy="10" r="2.800" fill="#cfcfcf"/><circle cx="7.500" cy="6" r="2" fill="#cfcfcf"/><circle cx="10" cy="2" r="1.400" fill="#cfcfcf"/></svg>
<div class="a" style="left:1025.8px;top:166px;width:26px;height:1.5px;background:#383838;"></div>
<svg style="left:1032.5px;top:169.6px" width="12" height="2" viewBox="0 0 12 2"><path d="M0 1h12" stroke="#626262" stroke-width="1.3" stroke-dasharray="1.5 1.5"/></svg>
<svg style="left:1032.5px;top:177px" width="14" height="10" viewBox="0 0 14 10"><path d="M4 9.500a3.500 3.500 0 0 1-.5-7a4 4 0 0 1 7.500 0.800a3.200 3.200 0 0 1-.5 6.200z" fill="none" stroke="#cfcfcf" stroke-width="1.400"/><circle cx="5.500" cy="5.500" r="1.800" fill="none" stroke="#cfcfcf"/><circle cx="8.800" cy="5.500" r="1.800" fill="none" stroke="#cfcfcf"/></svg>
<div class="a" style="left:1025.8px;top:192.4px;width:26px;height:1.5px;background:#383838;"></div>
<div class="a" style="left:1053.3px;top:28.4px;width:199.7px;height:665px;background:#535353;"></div>
<div class="a" style="left:1053.3px;top:28.4px;width:199.7px;height:11.2px;background:#3e3e3e;"></div>
<div class="a" style="left:1053.3px;top:28.4px;width:39.6px;height:11.2px;background:#535353;"></div>
<span class="t" style="left:1057.5px;top:29.09px;font-size:8.0px;color:#f4f4f4;font-weight:bold;transform:scaleX(0.7915);">Свойства</span>
<div class="a" style="left:1093.3px;top:29px;width:47px;height:10.6px;background:#474747;"></div>
<span class="t" style="left:1097.7px;top:29.09px;font-size:8.0px;color:#b4b4b4;transform:scaleX(0.8644);">Библиотека</span>
<svg style="left:1242px;top:32px" width="7" height="4" viewBox="0 0 7 4"><path d="M0 0.500h7M0 3h7" stroke="#a0a0a0" stroke-width="1.200"/></svg>
<span class="t" style="left:1101.2px;top:46.89px;font-size:8.0px;color:#d6d6d6;transform:scaleX(0.9521);">Документ</span>
<span class="t" style="left:1101.2px;top:66.29px;font-size:8.0px;color:#d6d6d6;transform:scaleX(0.9135);">Безымянный-1</span>
<svg style="left:1072px;top:56px" width="11.2" height="10.2" viewBox="0 0 11.2 10.2"><rect x="0.500" y="0.500" width="10.200" height="9.200" fill="none" stroke="#d8d8d8" stroke-width=".9"/></svg>
<span class="t" style="left:1074.0px;top:55.76px;font-size:6.3px;color:#e0e0e0;font-weight:bold;transform:scaleX(0.8327);">An</span>
<div class="a" style="left:1053.3px;top:81.4px;width:199.7px;height:1px;background:#464646;"></div>
<svg style="left:1056.3px;top:86.8px" width="5.4" height="4" viewBox="0 0 5.4 4"><path d="M0 0h5.400l-2.700 3.600z" fill="#d8d8d8"/></svg>
<span class="t" style="left:1065.8px;top:83.29px;font-size:8.0px;color:#d6d6d6;transform:scaleX(0.9481);">Опубликовать</span>
<span class="t" style="left:1064.0px;top:101.29px;font-size:8.0px;color:#bababa;transform:scaleX(0.9166);">Профиль:</span>
<span class="t" style="left:1101.5px;top:101.29px;font-size:8.0px;color:#d6d6d6;transform:scaleX(0.9377);">По умо...</span>
<div class="a" style="left:1100.8px;top:113px;width:102.6px;height:12.7px;background:#4e4e4e;border:1px solid #606060;border-radius:2px"></div>
<span class="t" style="left:1106.4px;top:114.09px;font-size:8.0px;color:#e8e8e8;transform:scaleX(0.9224);">Параметры публикации...</span>
<div class="a" style="left:1053.3px;top:129.4px;width:199.7px;height:1px;background:#464646;"></div>
<span class="t" style="left:1076.2px;top:134.19px;font-size:8.0px;color:#bababa;transform:scaleX(1.0155);">Цель:</span>
<div class="a" style="left:1101px;top:133.3px;width:63px;height:12.2px;background:#494949;border:1px solid #565656;border-radius:2px"></div>
<span class="t" style="left:1105.7px;top:134.19px;font-size:8.0px;color:#ececec;transform:scaleX(0.9284);">Flash Playe...</span>
<svg style="left:1155.4px;top:138.2px" width="6" height="4" viewBox="0 0 6 4"><path d="M0.300 0.300l2.700 2.700 2.700-2.700" fill="none" stroke="#d0d0d0" stroke-width=".9"/></svg>
<span class="t" style="left:1061.7px;top:152.59px;font-size:8.0px;color:#bababa;transform:scaleX(0.9183);">Сценарий:</span>
<div class="a" style="left:1101px;top:151.7px;width:63px;height:12.2px;background:#494949;border:1px solid #565656;border-radius:2px"></div>
<span class="t" style="left:1105.7px;top:152.59px;font-size:8.0px;color:#ececec;transform:scaleX(0.9546);">ActionScrip...</span>
<svg style="left:1155.4px;top:156.6px" width="6" height="4" viewBox="0 0 6 4"><path d="M0.300 0.300l2.700 2.700 2.700-2.700" fill="none" stroke="#d0d0d0" stroke-width=".9"/></svg>
<svg style="left:1170.5px;top:153px" width="9.5" height="9.5" viewBox="0 0 9.5 9.5"><path d="M1 1.200l2 2 1.300-.3.300-1.300-2-2a2.800 2.800 0 0 1 3.600 3.600l3.500 3.500a1.100 1.100 0 0 1-1.600 1.600l-3.500-3.500a2.800 2.800 0 0 1-3.600-3.600z" fill="#dcdcdc"/></svg>
<div class="a" style="left:1053.3px;top:169.9px;width:199.7px;height:1px;background:#464646;"></div>
<span class="t" style="left:1075.5px;top:176.19px;font-size:8.0px;color:#bababa;transform:scaleX(0.9250);">Класс:</span>
<div class="a" style="left:1101px;top:175.2px;width:63.6px;height:11.8px;background:#464646;border:1px solid #4e4e4e;border-radius:2px"></div>
<svg style="left:1171.5px;top:177.3px" width="8" height="8" viewBox="0 0 8 8"><path d="M0 8l.6-2.300 3.900-3.900 1.700 1.700-3.900 3.900zM5.100 1.200l.9-.9a.9.900 0 0 1 1.700 1.700l-.9.900z" fill="#dcdcdc"/></svg>
<div class="a" style="left:1053.3px;top:198.9px;width:199.7px;height:1px;background:#464646;"></div>
<svg style="left:1056.3px;top:204.6px" width="5.4" height="4" viewBox="0 0 5.4 4"><path d="M0 0h5.400l-2.700 3.600z" fill="#d8d8d8"/></svg>
<span class="t" style="left:1065.8px;top:201.09px;font-size:8.0px;color:#d6d6d6;transform:scaleX(0.9163);">Свойства</span>
<span class="t" style="left:1083.2px;top:218.09px;font-size:8.0px;color:#bababa;transform:scaleX(0.8155);">FPS:</span>
<span class="t" style="left:1102.6px;top:218.09px;font-size:8.0px;color:#ececec;transform:scaleX(0.8986);border-bottom:1px dotted #999;height:11px;">30,00</span>
<svg style="left:1102.2px;top:238.35px" width="7.5" height="7.5" viewBox="0 0 7.5 7.5"><rect x="0.500" y="0.500" width="6.5" height="6.5" rx=".8" fill="#4c4c4c" stroke="#c8c8c8" stroke-width=".85"/></svg>
<span class="t" style="left:1113.7px;top:236.79px;font-size:8.0px;color:#e4e4e4;transform:scaleX(0.9160);">Масштаб. диапазоны кадров</span>
<div class="a" style="left:1053.3px;top:252.9px;width:199.7px;height:1px;background:#464646;"></div>
<span class="t" style="left:1070.7px;top:258.29px;font-size:8.0px;color:#bababa;transform:scaleX(0.9186);">Размер:</span>
<span class="t" style="left:1102.6px;top:258.29px;font-size:8.0px;color:#bababa;transform:scaleX(0.8680);">Ш:</span>
<span class="t" style="left:1117.8px;top:258.29px;font-size:8.0px;color:#ececec;transform:scaleX(0.8766);border-bottom:1px dotted #999;height:11px;">1280</span>
<svg style="left:1150.5px;top:260.5px" width="10" height="7" viewBox="0 0 10 7"><path d="M3.500 0.500h-1a2.500 2.500 0 0 0 0 5.500h1M6.500 0.500h1a2.500 2.500 0 0 1 0 5.500h-1" fill="none" stroke="#c8c8c8" stroke-width="1"/><path d="M3.500 3.300h3" stroke="#c8c8c8" stroke-width="1" stroke-dasharray="1 1"/></svg>
<span class="t" style="left:1172.2px;top:258.29px;font-size:8.0px;color:#bababa;transform:scaleX(0.8992);">В:</span>
<span class="t" style="left:1188.0px;top:258.29px;font-size:8.0px;color:#ececec;transform:scaleX(0.8982);border-bottom:1px dotted #999;height:11px;">720</span>
<span class="t" style="left:1225.6px;top:258.29px;font-size:8.0px;color:#bababa;transform:scaleX(0.9128);">пикс.</span>
<svg style="left:1102.2px;top:277.85px" width="7.5" height="7.5" viewBox="0 0 7.5 7.5"><rect x="0.500" y="0.500" width="6.5" height="6.5" rx=".8" fill="#4c4c4c" stroke="#c8c8c8" stroke-width=".85"/></svg>
<span class="t" style="left:1113.7px;top:276.29px;font-size:8.0px;color:#e4e4e4;transform:scaleX(0.9148);">Масштаб. содержимое</span>
<div class="a" style="left:1101.2px;top:294.4px;width:120px;height:12px;background:#4e4e4e;border:1px solid #606060;border-radius:2px"></div>
<span class="t" style="left:1124.4px;top:295.19px;font-size:8.0px;color:#e8e8e8;transform:scaleX(0.9538);">Дополн. настройки...</span>
<div class="a" style="left:1053.3px;top:312.4px;width:199.7px;height:1px;background:#464646;"></div>
<span class="t" style="left:1057.9px;top:318.69px;font-size:8.0px;color:#bababa;transform:scaleX(0.9641);">Монт. стол:</span>
<div class="a" style="left:1103.3px;top:319px;width:19.7px;height:9.7px;background:#ffffff;border:1px solid #3c3c3c"></div>
<svg style="left:1104.3px;top:335.65px" width="7.5" height="7.5" viewBox="0 0 7.5 7.5"><rect x="0.500" y="0.500" width="6.5" height="6.5" rx=".8" fill="#4c4c4c" stroke="#c8c8c8" stroke-width=".85"/></svg>
<span class="t" style="left:1115.4px;top:334.09px;font-size:8.0px;color:#e4e4e4;transform:scaleX(0.9305);">Применить к области вставки</span>
<div class="a" style="left:1053.3px;top:356.2px;width:199.7px;height:1px;background:#464646;"></div>
<svg style="left:1056.3px;top:361.59999999999997px" width="5.4" height="4" viewBox="0 0 5.4 4"><path d="M0 0h5.400l-2.700 3.600z" fill="#d8d8d8"/></svg>
<span class="t" style="left:1065.8px;top:358.09px;font-size:8.0px;color:#d6d6d6;transform:scaleX(0.8975);">История SWF</span>
<div class="a" style="left:1067.6px;top:372.7px;width:39px;height:12px;background:#585858;border-radius:2px"></div>
<span class="t" style="left:1073.5px;top:373.49px;font-size:8.0px;color:#6c6c6c;transform:scaleX(0.9417);">Журнал</span>
<div class="a" style="left:1150px;top:372.7px;width:39.5px;height:12px;background:#585858;border-radius:2px"></div>
<span class="t" style="left:1155.5px;top:373.49px;font-size:8.0px;color:#6c6c6c;transform:scaleX(0.9330);">Удалить</span>
<div class="a" style="left:1053.3px;top:438.59999999999997px;width:199.7px;height:1px;background:#464646;"></div>
<svg style="left:1058px;top:442.1px" width="4" height="5.4" viewBox="0 0 4 5.4"><path d="M0 0v5.400l3.600-2.700z" fill="#d8d8d8"/></svg>
<span class="t" style="left:1065.8px;top:439.49px;font-size:8.0px;color:#d6d6d6;transform:scaleX(0.9173);">Расширенный доступ</span>
<div class="a" style="left:1256px;top:28px;width:24px;height:665px;background:#535353;"></div>
<div class="a" style="left:1256px;top:28px;width:24px;height:10.5px;background:#424242;"></div>
<svg style="left:1265px;top:31.5px" width="7" height="4" viewBox="0 0 7 4"><path d="M0 0.5h7M0 3h7" stroke="#a0a0a0" stroke-width="1.2"/></svg>
<div class="a" style="left:1257.1px;top:43.2px;width:19.5px;height:15.7px;background:#2b2b2b;border-radius:2px"></div>
<svg style="left:1263.1px;top:46.5px" width="8" height="10.5" viewBox="0 0 8 10.5"><path d="M0.500 0.900l7 6.100-3.800.5-3.200 2.700z" fill="none" stroke="#d4d4d4" stroke-width="1"/></svg>
<svg style="left:1263.1px;top:65.1px" width="8" height="11" viewBox="0 0 8 11"><path d="M0 0l7.900 6.600-4.300.5-3.600 3.800z" fill="#d4d4d4"/></svg>
<svg style="left:1261px;top:83.3px" width="13" height="12" viewBox="0 0 13 12"><path d="M0 0l5.800 4.800-3.200.4-2.600 2.800z" fill="#d4d4d4"/><path d="M5 1.500h7.200v8.300h-8.500v-2.500" fill="none" stroke="#d4d4d4" stroke-width="1" stroke-dasharray="1.300 1"/></svg>
<svg style="left:1274.3px;top:94.3px" width="2.3" height="2.3" viewBox="0 0 2.3 2.3"><path d="M2.300 0v2.300h-2.300z" fill="#d0d0d0"/></svg>
<svg style="left:1261.0px;top:101.5px" width="12" height="12" viewBox="0 0 12 12"><circle cx="6" cy="6" r="5" fill="#d4d4d4"/><path d="M6 1v10M1.500 4.500c3 2 6 2 9 0" fill="none" stroke="#535353" stroke-width=".9"/><path d="M6 1a5 5 0 0 1 0 10" fill="#8a8a8a"/></svg>
<svg style="left:1275.3px;top:111.7px" width="2.3" height="2.3" viewBox="0 0 2.3 2.3"><path d="M2.5 0v2.5h-2.5z" fill="#d0d0d0"/></svg>
<svg style="left:1261.0px;top:120.2px" width="12" height="12" viewBox="0 0 12 12"><ellipse cx="6.500" cy="4.500" rx="5" ry="3.500" fill="none" stroke="#d4d4d4" stroke-width="1.300"/><path d="M3.500 7.500c-1.500 1-1 2.500.5 2.500s1.500 1.500.5 2.500" fill="none" stroke="#d4d4d4" stroke-width="1.100"/></svg>
<svg style="left:1275.3px;top:130.4px" width="2.3" height="2.3" viewBox="0 0 2.3 2.3"><path d="M2.5 0v2.5h-2.5z" fill="#d0d0d0"/></svg>
<div class="a" style="left:1256px;top:135.7px;width:24px;height:1.4px;background:#383838;"></div>
<svg style="left:1261.0px;top:140.7px" width="12" height="12" viewBox="0 0 12 12"><path d="M8.500 0.500l3 3-1.500 1.500-3-3zM6.300 2.800l3 3-2.300 4.200-5.500 1.500 1.500-5.500zM1.500 11.500l3.500-3.500" fill="#d4d4d4"/><circle cx="5.600" cy="7.400" r="1" fill="#535353"/></svg>
<svg style="left:1275.3px;top:150.89999999999998px" width="2.3" height="2.3" viewBox="0 0 2.3 2.3"><path d="M2.5 0v2.5h-2.5z" fill="#d0d0d0"/></svg>
<span class="t" style="left:1262.6px;top:161.22px;font-size:12.5px;color:#d4d4d4;font-weight:bold;transform:scaleX(1.0307);font-family:'Liberation Serif',serif;">T</span>
<svg style="left:1261.0px;top:178.7px" width="12" height="12" viewBox="0 0 12 12"><path d="M1 11l10-10" stroke="#d4d4d4" stroke-width="1.300"/></svg>
<svg style="left:1261.0px;top:196.9px" width="12" height="12" viewBox="0 0 12 12"><rect x="1.200" y="1.600" width="9.600" height="8.800" fill="#858585" stroke="#d4d4d4" stroke-width="1"/></svg>
<svg style="left:1275.3px;top:207.1px" width="2.3" height="2.3" viewBox="0 0 2.3 2.3"><path d="M2.5 0v2.5h-2.5z" fill="#d0d0d0"/></svg>
<svg style="left:1261.0px;top:216.0px" width="12" height="12" viewBox="0 0 12 12"><ellipse cx="6" cy="6" rx="5" ry="3.900" fill="#858585" stroke="#d4d4d4" stroke-width="1"/></svg>
<svg style="left:1275.3px;top:226.2px" width="2.3" height="2.3" viewBox="0 0 2.3 2.3"><path d="M2.5 0v2.5h-2.5z" fill="#d0d0d0"/></svg>
<svg style="left:1261.0px;top:234.4px" width="12" height="12" viewBox="0 0 12 12"><path d="M3.600 1.900h4.800l2.400 4.100-2.400 4.100h-4.800l-2.400-4.100z" fill="#858585" stroke="#d4d4d4" stroke-width="1"/></svg>
<svg style="left:1261.0px;top:252.8px" width="12" height="12" viewBox="0 0 12 12"><path d="M0.500 11.500l1-3.500 6.500-6.500 2.500 2.500-6.500 6.500zM8.800 0.700l1-1 2.500 2.500-1 1z" fill="#d4d4d4"/></svg>
<svg style="left:1261.0px;top:271.0px" width="12" height="12" viewBox="0 0 12 12"><path d="M11.500 0.500c-3 1-5.500 3.500-7 6l1.500 1.500c2.500-2 4.500-4.500 5.500-7.500zM3.500 7.500c-2 0-3 1.500-3.300 4 2.500 0 4.300-.8 4.500-2.800z" fill="#d4d4d4"/><path d="M1 4a2.500 2.500 0 1 1 3 2" fill="none" stroke="#d4d4d4" stroke-width=".9"/></svg>
<svg style="left:1261.0px;top:290.5px" width="12" height="12" viewBox="0 0 12 12"><path d="M11.500 0.500c-3 1-5.500 3.500-7 6l1.500 1.500c2.500-2 4.500-4.500 5.500-7.500zM3.500 7.500c-2 0-3 1.500-3.300 4 2.500 0 4.300-.8 4.500-2.800z" fill="#d4d4d4"/></svg>
<div class="a" style="left:1256px;top:306.3px;width:24px;height:1.4px;background:#383838;"></div>
<svg style="left:1261.0px;top:312.2px" width="12" height="12" viewBox="0 0 12 12"><path d="M1.500 10.500l3.500-3.500 2 .5 3-4" fill="none" stroke="#d4d4d4" stroke-width="2"/><circle cx="2" cy="10" r="1.800" fill="#d4d4d4"/><circle cx="10" cy="2.500" r="2.200" fill="#d4d4d4"/><circle cx="5.500" cy="7" r="1.600" fill="#d4d4d4"/></svg>
<svg style="left:1275.3px;top:322.4px" width="2.3" height="2.3" viewBox="0 0 2.3 2.3"><path d="M2.5 0v2.5h-2.5z" fill="#d0d0d0"/></svg>
<svg style="left:1261.0px;top:330.0px" width="12" height="12" viewBox="0 0 12 12"><path d="M1 6.500l5-4.500 5 5-4.500 4.500zM6 2l-2.500-2" fill="#d4d4d4" stroke="#d4d4d4" stroke-width=".8"/><path d="M11 7.500c1 1.500 1.200 2.500.3 3-.9-.5-.9-1.500-.3-3z" fill="#d4d4d4"/></svg>
<svg style="left:1261.0px;top:348.0px" width="12" height="12" viewBox="0 0 12 12"><path d="M0.500 4l3-2.500 3 3-2.500 3zM3.500 1.500l-1.500-1.500" fill="#d4d4d4" stroke="#d4d4d4" stroke-width=".6"/><rect x="6.500" y="6" width="5" height="5" fill="none" stroke="#d4d4d4" stroke-width="1.100"/></svg>
<svg style="left:1261.0px;top:367.5px" width="12" height="12" viewBox="0 0 12 12"><path d="M0.500 11.500l.8-2.500 5.500-5.500 1.700 1.700-5.500 5.500zM7 2.500l2-2a1.600 1.600 0 0 1 2.500 2.500l-2 2z" fill="#d4d4d4"/></svg>
<svg style="left:1261.0px;top:386.2px" width="12" height="12" viewBox="0 0 12 12"><path d="M1 7l5.500-5.500 4.500 4.500-5.500 5.500h-2z" fill="#d4d4d4"/><path d="M1 7l3 3" stroke="#535353" stroke-width="0"/></svg>
<svg style="left:1261.0px;top:405.0px" width="12" height="12" viewBox="0 0 12 12"><path d="M1 9c1.500-2 2-5 3.500-5s0 4 1.500 4 1.500-5 3-5 1 3 2 3" fill="none" stroke="#d4d4d4" stroke-width="1.400"/><path d="M0 11.500h12" stroke="#d4d4d4" stroke-width=".9"/></svg>
<svg style="left:1261.0px;top:423.7px" width="12" height="12" viewBox="0 0 12 12"><path d="M6.500 0.500l4.500 4.500-1.500.3-2.300 2.300.3 2.400-1.500 1-2.500-2.800-3 3.300.5-1 2-3-2.500-2.500 1-1.500 2.500.3 2.300-2.300z" fill="#d4d4d4"/></svg>
<div class="a" style="left:1256px;top:439.2px;width:24px;height:1.4px;background:#383838;"></div>
<svg style="left:1261.0px;top:444.4px" width="12" height="12" viewBox="0 0 12 12"><rect x="0.500" y="2" width="8" height="8" rx="1" fill="#d4d4d4"/><path d="M8.500 6l3.500-3.500v7z" fill="#d4d4d4"/></svg>
<svg style="left:1275.3px;top:454.59999999999997px" width="2.3" height="2.3" viewBox="0 0 2.3 2.3"><path d="M2.5 0v2.5h-2.5z" fill="#d0d0d0"/></svg>
<svg style="left:1261.0px;top:463.1px" width="12" height="12" viewBox="0 0 12 12"><path d="M2.500 5.500v-3a.9.9 0 0 1 1.800 0v-1.500a.9.900 0 0 1 1.800 0v-.2a.900.900 0 0 1 1.800 0v1.500a.900.900 0 0 1 1.800 0v5.500c0 3-1.500 4.200-4 4.200s-3.500-1.500-4.500-3.500l-1-2.500c.8-.8 1.800-.3 2.300.8z" fill="#d4d4d4"/></svg>
<svg style="left:1275.3px;top:473.3px" width="2.3" height="2.3" viewBox="0 0 2.3 2.3"><path d="M2.5 0v2.5h-2.5z" fill="#d0d0d0"/></svg>
<svg style="left:1261.0px;top:482.6px" width="12" height="12" viewBox="0 0 12 12"><circle cx="4.800" cy="4.800" r="3.800" fill="none" stroke="#d4d4d4" stroke-width="1.400"/><path d="M7.500 7.500l4 4" stroke="#d4d4d4" stroke-width="1.800"/></svg>
<div class="a" style="left:1256px;top:500px;width:24px;height:1.4px;background:#383838;"></div>
<svg style="left:1262.0px;top:506.6px" width="10" height="10" viewBox="0 0 10 10"><path d="M0.500 9.500l.7-2.200 4.700-4.700 1.500 1.500-4.700 4.700zM6.500 2l1.200-1.200 1.500 1.500-1.200 1.200z" fill="#d4d4d4"/></svg>
<div class="a" style="left:1260.4px;top:519.7px;width:13.4px;height:13.3px;background:#ffffff;border:1px solid #999"></div>
<svg style="left:1260.4px;top:519.7px" width="13.4" height="13.3" viewBox="0 0 13.4 13.3"><path d="M0.800 12.500l11.800-11.700" stroke="#e02020" stroke-width="1"/></svg>
<div class="a" style="left:1261.3px;top:538.9px;width:11.9px;height:11.5px;background:#2a2a2a;border-radius:1.500px"></div>
<svg style="left:1263px;top:540.6px" width="8.5" height="8" viewBox="0 0 8.5 8"><rect x="0.500" y="0.500" width="7.500" height="7" fill="#888" stroke="#e0e0e0" stroke-width="1"/></svg>
<div class="a" style="left:1260.4px;top:553.2px;width:13.4px;height:13.4px;background:#1268d8;"></div>
<svg style="left:1258px;top:572px" width="7.5" height="7.5" viewBox="0 0 7.5 7.5"><rect x="0.500" y="0.500" width="5" height="5" fill="#fff" stroke="#222" stroke-width=".7"/><rect x="3" y="3" width="4.500" height="4.500" fill="#111" stroke="#eee" stroke-width=".7"/></svg>
<svg style="left:1267.5px;top:572.5px" width="7" height="7" viewBox="0 0 7 7"><path d="M0.500 0.500v6l2.500-3zM4 3.500h3.500M6 1.500l1.500 2-1.500 2" fill="none" stroke="#7c7c7c" stroke-width=".9"/></svg>
<div class="a" style="left:1256px;top:585.2px;width:24px;height:1.4px;background:#383838;"></div>
<div class="a" style="left:1258px;top:590.2px;width:18px;height:14px;background:#2b2b2b;border-radius:2px"></div>
<svg style="left:1261.5px;top:592.0px" width="11" height="11" viewBox="0 0 11 11"><path d="M1.500 10.500v-5a4 4 0 0 1 8 0v5h-2.500v-5a1.500 1.500 0 0 0-3 0v5z" fill="#d4d4d4"/></svg>
<span class="t" style="left:1264.0px;top:611.04px;font-size:10.0px;color:#787878;transform:scaleX(0.86);">S</span>
<svg style="left:1264.3px;top:624.5px" width="6" height="10" viewBox="0 0 6 10"><path d="M1.500 0.500v4.500h3.500v5.500" fill="none" stroke="#747474" stroke-width="1.100"/></svg>
<div class="a" style="left:0px;top:691.5px;width:1280px;height:1.5px;background:#3c3c3c;"></div>
<div class="a" style="left:312px;top:91px;width:656.1px;height:506.2px;background:#535353;box-shadow:0 1px 9px 1px rgba(20,30,50,.22)"></div>
<div class="a" style="left:312px;top:91px;width:656.1px;height:506.2px;background:#535353;box-shadow:inset 0 0 0 1.600px #3e6690"></div>
<div class="a" style="left:312px;top:91px;width:656.1px;height:21.3px;background:#3f8fdb;"></div>
<span class="t" style="left:318.2px;top:95.92px;font-size:8.4px;color:#0b1f3a;transform:scaleX(0.9689);">Настройки</span>
<svg style="left:954px;top:98px" width="7" height="7" viewBox="0 0 7 7"><path d="M0.300 0.300l6.400 6.400M6.700 0.300l-6.400 6.400" stroke="#12233c" stroke-width="1" fill="none"/></svg>
<div class="a" style="left:434px;top:112.5px;width:1px;height:483px;background:#333333;"></div>
<div class="a" style="left:313px;top:113px;width:121px;height:15px;background:#6b6b6b;border-top:1px solid #9a9a9a;border-bottom:1.500px solid #e6e6e6;border-right:1px solid #999"></div>
<span class="t" style="left:319.8px;top:115.25px;font-size:7.5px;color:#e6e6e6;transform:scaleX(0.9606);">Общие</span>
<span class="t" style="left:319.8px;top:131.45px;font-size:7.5px;color:#e6e6e6;transform:scaleX(1.0239);">Редактор кода</span>
<span class="t" style="left:319.8px;top:147.65px;font-size:7.5px;color:#e6e6e6;transform:scaleX(0.9622);">Файлы сценариев</span>
<span class="t" style="left:319.8px;top:163.35px;font-size:7.5px;color:#e6e6e6;transform:scaleX(1.0029);">Компилятор</span>
<span class="t" style="left:319.8px;top:179.45px;font-size:7.5px;color:#e6e6e6;transform:scaleX(1.0164);">Текст</span>
<span class="t" style="left:319.8px;top:195.25px;font-size:7.5px;color:#e6e6e6;transform:scaleX(0.9860);">Рисунок</span>
<span class="t" style="left:534.5px;top:140.89px;font-size:8.0px;color:#bebebe;transform:scaleX(0.9283);">Отменить:</span>
<div class="a" style="left:575px;top:138.9px;width:136px;height:13.1px;background:#494949;border:1px solid #505050;border-radius:2px"></div>
<span class="t" style="left:579.3px;top:140.69px;font-size:8.0px;color:#e6e6e6;transform:scaleX(0.9331);">Отменить на уровне документа</span>
<svg style="left:701.4px;top:144.7px" width="6" height="4" viewBox="0 0 6 4"><path d="M0.300 0.300l2.700 2.700 2.700-2.700" fill="none" stroke="#d0d0d0" stroke-width=".9"/></svg>
<span class="t" style="left:576.0px;top:158.89px;font-size:8.0px;color:#e6e6e6;transform:scaleX(0.8608);border-bottom:1px dotted #999;height:11px;">100</span>
<span class="t" style="left:590.0px;top:158.89px;font-size:8.0px;color:#bebebe;transform:scaleX(0.9787);">уровни</span>
<span class="t" style="left:496.2px;top:188.89px;font-size:8.0px;color:#bebebe;transform:scaleX(0.9324);">Автовосстановление:</span>
<svg style="left:577px;top:189.7px" width="8" height="8" viewBox="0 0 8 8"><rect x="0.3" y="0.3" width="7.4" height="7.4" rx=".8" fill="#dadada"/><path d="M1.700 4.0l1.700 1.800 2.600-3.600" fill="none" stroke="#333" stroke-width="1.100"/></svg>
<span class="t" style="left:593.0px;top:188.39px;font-size:8.0px;color:#e6e6e6;transform:scaleX(0.8421);border-bottom:1px dotted #999;height:11px;">10</span>
<span class="t" style="left:603.0px;top:188.39px;font-size:8.0px;color:#bebebe;transform:scaleX(0.9031);">мин.</span>
<span class="t" style="left:480.5px;top:219.19px;font-size:8.0px;color:#bebebe;transform:scaleX(0.9254);">Интерфейс пользователя:</span>
<div class="a" style="left:575px;top:217.8px;width:78.6px;height:12.6px;background:#494949;border:1px solid #505050;border-radius:2px"></div>
<span class="t" style="left:579.5px;top:218.89px;font-size:8.0px;color:#e6e6e6;transform:scaleX(0.8956);">Темный</span>
<svg style="left:644.4px;top:223.0px" width="6" height="4" viewBox="0 0 6 4"><path d="M0.300 0.300l2.700 2.700 2.700-2.700" fill="none" stroke="#d0d0d0" stroke-width=".9"/></svg>
<svg style="left:575.3px;top:236.5px" width="8" height="8" viewBox="0 0 8 8"><rect x="0.3" y="0.3" width="7.4" height="7.4" rx=".8" fill="#dadada"/><path d="M1.700 4.0l1.700 1.800 2.600-3.600" fill="none" stroke="#333" stroke-width="1.100"/></svg>
<span class="t" style="left:586.6px;top:235.19px;font-size:8.0px;color:#e6e6e6;transform:scaleX(0.9177);">Включить затенение</span>
<svg style="left:575.3px;top:251.3px" width="8" height="8" viewBox="0 0 8 8"><rect x="0.500" y="0.500" width="7" height="7" rx=".8" fill="#4c4c4c" stroke="#c8c8c8" stroke-width=".85"/></svg>
<span class="t" style="left:586.6px;top:249.99px;font-size:8.0px;color:#e6e6e6;transform:scaleX(0.9417);">Скрыть границу рабочей области</span>
<svg style="left:575.3px;top:266.0px" width="8" height="8" viewBox="0 0 8 8"><rect x="0.500" y="0.500" width="7" height="7" rx=".8" fill="#4c4c4c" stroke="#c8c8c8" stroke-width=".85"/></svg>
<span class="t" style="left:586.6px;top:264.69px;font-size:8.0px;color:#e6e6e6;transform:scaleX(0.9435);">Использовать контуры при панорамировании рабочей области для повышения производительности</span>
<svg style="left:575.3px;top:280.7px" width="8" height="8" viewBox="0 0 8 8"><rect x="0.500" y="0.500" width="7" height="7" rx=".8" fill="#4c4c4c" stroke="#c8c8c8" stroke-width=".85"/></svg>
<span class="t" style="left:586.6px;top:279.39px;font-size:8.0px;color:#e6e6e6;transform:scaleX(0.9378);">Не показывать уведомления в приложениях</span>
<svg style="left:575.3px;top:295.3px" width="8" height="8" viewBox="0 0 8 8"><rect x="0.500" y="0.500" width="7" height="7" rx=".8" fill="#4c4c4c" stroke="#c8c8c8" stroke-width=".85"/></svg>
<span class="t" style="left:586.6px;top:293.99px;font-size:8.0px;color:#e6e6e6;transform:scaleX(0.9370);">Скрыть маркеры времени на шкале времени</span>
<span class="t" style="left:490.2px;top:320.19px;font-size:8.0px;color:#bebebe;transform:scaleX(0.9355);">Рабочее пространство:</span>
<svg style="left:577.3px;top:321.2px" width="8" height="8" viewBox="0 0 8 8"><rect x="0.3" y="0.3" width="7.4" height="7.4" rx=".8" fill="#dadada"/><path d="M1.700 4.0l1.700 1.800 2.600-3.600" fill="none" stroke="#333" stroke-width="1.100"/></svg>
<span class="t" style="left:588.9px;top:319.89px;font-size:8.0px;color:#e6e6e6;transform:scaleX(0.9387);">Автоматически сворачивать панели значков</span>
<svg style="left:577.3px;top:334.1px" width="8" height="8" viewBox="0 0 8 8"><rect x="0.500" y="0.500" width="7" height="7" rx=".8" fill="#4c4c4c" stroke="#c8c8c8" stroke-width=".85"/></svg>
<span class="t" style="left:588.9px;top:332.79px;font-size:8.0px;color:#e6e6e6;transform:scaleX(0.9425);">Открывать документы Animate и сценария в отдельных окнах</span>
<span class="t" style="left:514.7px;top:359.19px;font-size:8.0px;color:#bebebe;transform:scaleX(0.9442);">Цвет подсветки:</span>
<svg style="left:577.3px;top:360.4px" width="8.3" height="8.3" viewBox="0 0 8.3 8.3"><circle cx="4.150" cy="4.150" r="3.600" fill="#4d4d4d" stroke="#d0d0d0" stroke-width=".8"/></svg>
<span class="t" style="left:588.6px;top:359.19px;font-size:8.0px;color:#e6e6e6;transform:scaleX(0.9260);">Использовать цвет слоя</span>
<svg style="left:577.3px;top:373.6px" width="8.3" height="8.3" viewBox="0 0 8.3 8.3"><circle cx="4.150" cy="4.150" r="3.700" fill="#dcdcdc"/><circle cx="4.150" cy="4.150" r="1.500" fill="#3a3a3a"/></svg>
<span class="t" style="left:588.6px;top:372.49px;font-size:8.0px;color:#e6e6e6;transform:scaleX(0.9348);">Использовать заказной цвет</span>
<div class="a" style="left:588.2px;top:386.4px;width:13.3px;height:10.2px;background:#2abcb2;border:1px solid #3a3a3a"></div>
<span class="t" style="left:608.0px;top:386.19px;font-size:8.0px;color:#bebebe;transform:scaleX(0.9754);">Группы</span>
<div class="a" style="left:588.2px;top:401.4px;width:13.3px;height:10.2px;background:#20a6fa;border:1px solid #3a3a3a"></div>
<span class="t" style="left:608.0px;top:401.19px;font-size:8.0px;color:#bebebe;transform:scaleX(0.9044);">Символы</span>
<div class="a" style="left:588.2px;top:416.09999999999997px;width:13.3px;height:10.2px;background:#1670fa;border:1px solid #3a3a3a"></div>
<span class="t" style="left:608.0px;top:415.89px;font-size:8.0px;color:#bebebe;transform:scaleX(0.9220);">Другие элементы</span>
<span class="t" style="left:461.4px;top:442.99px;font-size:8.0px;color:#bebebe;transform:scaleX(0.9560);">Цвет многослойной структуры:</span>
<div class="a" style="left:588.2px;top:443.2px;width:13.3px;height:10.2px;background:#0000ff;border:1px solid #3a3a3a"></div>
<span class="t" style="left:608.0px;top:442.99px;font-size:8.0px;color:#bebebe;transform:scaleX(0.9386);">Прошлое</span>
<div class="a" style="left:588.2px;top:458.2px;width:13.3px;height:10.2px;background:#ff0000;border:1px solid #3a3a3a"></div>
<span class="t" style="left:608.0px;top:457.99px;font-size:8.0px;color:#bebebe;transform:scaleX(0.9289);">Настоящее</span>
<div class="a" style="left:588.2px;top:472.9px;width:13.3px;height:10.2px;background:#00ff00;border:1px solid #3a3a3a"></div>
<span class="t" style="left:608.0px;top:472.69px;font-size:8.0px;color:#bebebe;transform:scaleX(0.9399);">Будущее</span>
<div class="a" style="left:448px;top:506px;width:477.5px;height:1px;background:#484848;"></div>
<div class="a" style="left:448px;top:507px;width:477.5px;height:1px;background:#5b5b5b;"></div>
<div class="a" style="left:448px;top:518px;width:248.4px;height:12.8px;background:#585858;border-radius:2px"></div>
<span class="t" style="left:457.5px;top:519.19px;font-size:8.0px;color:#757575;transform:scaleX(0.9330);">Сброс всех диалоговых окон с предупреждающими сообщениями</span>
<div class="a" style="left:803px;top:565px;width:62px;height:17.5px;background:transparent;border:1.600px solid #f2f2f2;border-radius:9px"></div>
<span class="t" style="left:827.8px;top:568.51px;font-size:8.3px;color:#f0f0f0;transform:scaleX(0.9333);">OK</span>
<div class="a" style="left:871px;top:565px;width:62px;height:17.5px;background:transparent;border:1px solid #dcdcdc;border-radius:9px"></div>
<span class="t" style="left:889.5px;top:568.51px;font-size:8.3px;color:#f0f0f0;transform:scaleX(0.8562);">Отмена</span>
</div>
</body>
</html>
